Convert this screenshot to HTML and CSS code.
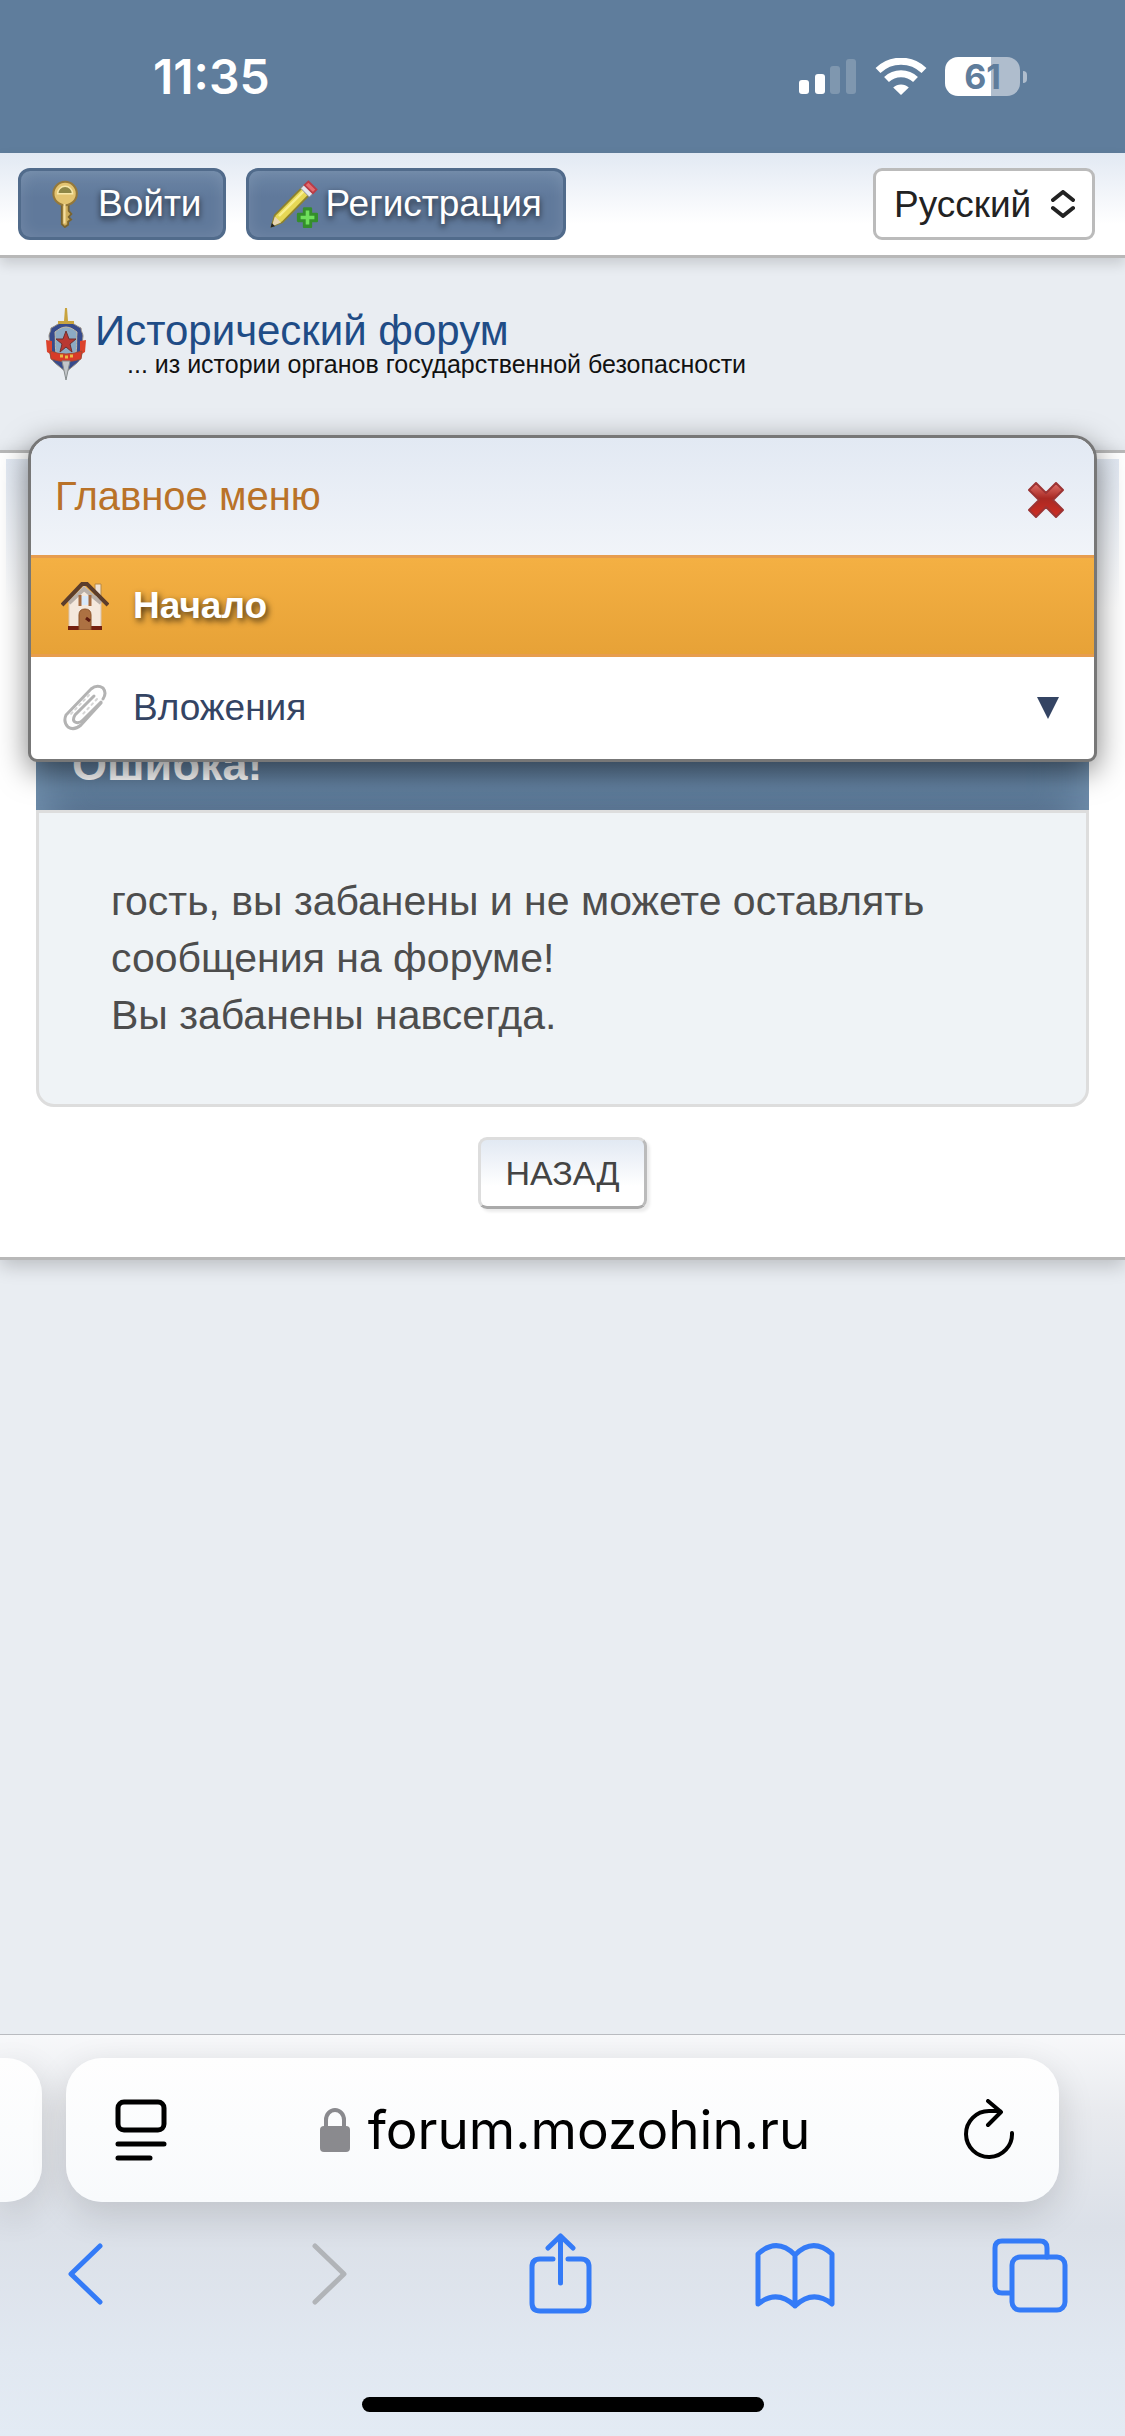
FILE: index.html
```html
<!DOCTYPE html>
<html lang="ru">
<head>
  <meta charset="UTF-8" />
  <meta name="viewport" content="width=device-width, initial-scale=1" />
  <title>Исторический форум</title>
  <link rel="stylesheet" href="styles.css">
</head>
<body>

  <!-- Status bar -->
  <div class="status-bar">
    <span class="clock">11:35</span>
    <div class="status-icons">
      <svg width="58" height="36" viewBox="0 0 58 36" fill="#fff">
        <rect x="0" y="21" width="10" height="14" rx="3"/>
        <rect x="16" y="15" width="10" height="20" rx="3"/>
        <rect x="31" y="7" width="10" height="28" rx="3" opacity=".2"/>
        <rect x="47" y="0" width="10" height="35" rx="3" opacity=".2"/>
      </svg>
      <svg width="52" height="38" viewBox="0 0 52 38" fill="none" stroke="#fff" stroke-width="7">
        <path d="M3 12.500a33 33 0 0 1 46 0"/>
        <path d="M11.500 21.500a21 21 0 0 1 29 0"/>
        <path d="M26 37l-7.800-7.500a11.300 11.300 0 0 1 15.600 0z" fill="#fff" stroke="none"/>
      </svg>
      <div class="battery"><span class="battery-level">61</span></div>
    </div>
  </div>

  <!-- Login / register / language -->
  <div class="top-section">
    <a class="button login" href="#">
      <svg width="48" height="48" viewBox="0 0 16 16">
        <path d="M6.600 7.500v7.200l1 1 1.100-.8v-1l1-.7-.8-.9.9-1-.9-1V7.500z" fill="#cfae5c" stroke="#7a642f" stroke-width=".6"/>
        <circle cx="7.700" cy="4.500" r="3.900" fill="#e3c471" stroke="#94783a" stroke-width=".7"/>
        <path d="M5.200 4.600a2.500 2.500 0 0 1 5 0z" fill="#8e8746" stroke="#f7e7a8" stroke-width=".5"/>
        <path d="M7.500 8v6.500" stroke="#f5dea0" stroke-width=".7"/>
      </svg>
      <span>Войти</span>
    </a>
    <a class="button register" href="#">
      <svg width="48" height="48" viewBox="0 0 16 16">
        <path d="M.6 15.400l1-3.700L10.700 2.500l2.400 2.400-9 9.200z" fill="#e6d855" stroke="#8d822e" stroke-width=".6"/>
        <path d="M3 12L12 3" stroke="#f8ef90" stroke-width=".8"/>
        <path d="M.6 15.500l1-3.300 2.100 2z" fill="#e8d5b0"/>
        <path d="M.2 15.800l.4-1.500 1.100 1.100z" fill="#222"/>
        <path d="M10.300 2.800l1.100-1.200 2.900 2.900-1.200 1.200z" fill="#e3e6ee" stroke="#8a8d96" stroke-width=".3"/>
        <path d="M11.500 1.700L12.800.5l2.700 2.700-1.200 1.200z" fill="#e46b70" stroke="#b93c46" stroke-width=".6"/>
        <path d="M11.400 9.500h2.200v1.900h2v2.200h-2v2h-2.200v-2h-2v-2.200h2z" fill="#348e2c" stroke="#348e2c" stroke-width=".9" stroke-linejoin="round"/>
        <path d="M12.500 10.200v4.600M10.200 12.500h4.600" stroke="#6fdf5c" stroke-width="1.200"/>
      </svg>
      <span>Регистрация</span>
    </a>
    <div class="lang-select">
      <select aria-label="Язык">
        <option>Русский</option>
      </select>
      <svg width="24" height="28" viewBox="0 0 24 28" fill="none" stroke="#222" stroke-width="4" stroke-linecap="round" stroke-linejoin="round">
        <path d="M2 10L12 2l10 8M2 18l10 8 10-8"/>
      </svg>
    </div>
  </div>

  <!-- Logo -->
  <header class="header">
    <svg class="emblem" width="42" height="72" viewBox="0 0 42 72">
      <path d="M21 14C14 14 11 18 6 20c0 4-2 5-2 8 2 12-2 20 6 27l11 9 11-9c8-7 4-15 6-27 0-3-2-4-2-8-5-2-8-6-15-6z" fill="#374b8c" stroke="#958e83"/>
      <path d="M1 32l6 1v14l-5-3z M41 32l-6 1v14l5-3z" fill="#dc432d"/>
      <path d="M21 19c-5 0-8 3-11 5 1 12-1 19 3 25h16c4-6 2-13 3-25-3-2-6-5-11-5z" fill="#8caac4" stroke="#c6bca5"/>
      <path d="M19 13l1-13h2l1 13h6v3H13v-3z" fill="#c8a33e"/>
      <path d="M21 23l3 8h7l-6 5 2 8-6-5-6 5 2-8-6-5h7z" fill="#b93932" stroke="#6e302e"/>
      <path d="M5 43q16 6 32 0l-1 8q-15 5-30 0z" fill="#d83b29" stroke="#a34a35"/>
      <path d="M15 48h3m2 1h3m2-1h3" stroke="#e9ba45" stroke-width="3"/>
      <path d="M17 53h8l-4 19z" fill="#c3c6c9" stroke="#858b8c"/>
    </svg>
    <div class="logo-text">
      <h1>Исторический форум</h1>
      <p>... из истории органов государственной безопасности</p>
    </div>
  </header>

  <!-- Page content -->
  <div class="wrapper">
    <!-- Popup menu -->
    <nav class="popup-menu">
      <div class="popup-heading">
        <span>Главное меню</span>
        <button class="close-btn" aria-label="Закрыть">
          <svg width="36" height="36" viewBox="0 0 36 36">
            <defs>
              <linearGradient id="cross" x1="0" y1="0" x2="0" y2="1">
                <stop offset="0" stop-color="#e0716b"/>
                <stop offset=".45" stop-color="#a92923"/>
                <stop offset="1" stop-color="#cf2d23"/>
              </linearGradient>
            </defs>
            <path d="M8 1l10 10L28 1l7 7-10 10 10 10-7 7-10-10L8 35l-7-7 10-10L1 8z" fill="url(#cross)" stroke="#9c3434" stroke-width="2" stroke-linejoin="round"/>
          </svg>
        </button>
      </div>
      <a class="menu-item active" href="#">
        <svg width="48" height="48" viewBox="0 0 48 48">
          <path d="M34 2h6v16h-6z" fill="#eee1d5" stroke="#b88944"/>
          <path d="M8 20L23 4l17 16v26H8z" fill="#f4e8dd" stroke="#d9c3ae"/>
          <path d="M8 21L23 7l17 14" fill="none" stroke="#b9afa8" stroke-width="4"/>
          <path d="M1 23L21 2h5l21 21" fill="none" stroke="#5c3d2b" stroke-width="4"/>
          <path d="M7 46h34" stroke="#74200f" stroke-width="4"/>
          <path d="M20 14h9v9h-9z" fill="#d8e8fa"/>
          <path d="M19 13v11M29 13v11" stroke="#a56b40" stroke-width="3"/>
          <path d="M18 48V33q0-6 6-6t6 6v15z" fill="#ad7142" stroke="#8b5229"/>
          <path d="M25 36l4 3" stroke="#5e1b10" stroke-width="3"/>
        </svg>
        <span>Начало</span>
      </a>
      <a class="menu-item" href="#">
        <svg width="48" height="48" viewBox="0 0 48 48" fill="none" stroke="#b3b3b3" stroke-width="3" stroke-linecap="round">
          <path d="M40 19L20 41q-7 6-13 2-5-5-2-12L30 5q6-5 12-1 4 5 0 11"/>
          <path d="M33 12L14 31q-3 5 0 7 4 2 8-2l18-18"/>
          <path d="M28 11L9 31M36 15L20 32" stroke="#d6d6d6" stroke-width="2" stroke-dasharray="2 4"/>
        </svg>
        <span>Вложения</span>
        <svg class="arrow" width="22" height="22" viewBox="0 0 22 22"><path d="M0 0h22L11 22z" fill="#344463"/></svg>
      </a>
    </nav>

    <main class="main-content">
      <h2 class="cat-bar">Ошибка!</h2>
      <div class="error-box">
        <p>гость, вы забанены и не можете оставлять сообщения на форуме!<br>Вы забанены навсегда.</p>
      </div>
      <button class="back-btn">НАЗАД</button>
    </main>
  </div>

  <!-- Browser bar -->
  <footer class="browser-bar">
    <div class="address-row">
      <div class="prev-tab"></div>
      <div class="address">
        <button aria-label="Меню страницы">
          <svg width="52" height="62" viewBox="0 0 52 62" fill="none" stroke="#000" stroke-width="5" stroke-linecap="round">
            <rect x="3" y="3" width="46" height="28" rx="6"/>
            <path d="M3 45h46M3 59h32"/>
          </svg>
        </button>
        <div class="domain">
          <svg width="30" height="44" viewBox="0 0 30 44">
            <path d="M6 20v-8a9 10 0 0 1 18 0v8" fill="none" stroke="#8a8a8e" stroke-width="4"/>
            <rect y="18" width="30" height="26" rx="4" fill="#8a8a8e"/>
          </svg>
          <span>forum.mozohin.ru</span>
        </div>
        <button aria-label="Обновить">
          <svg width="52" height="62" viewBox="0 0 52 62" fill="none" stroke="#000" stroke-width="4" stroke-linecap="round" stroke-linejoin="round">
            <path d="M49 34a23 23 0 1 1-23-22h11M25 2l13 11-13 13"/>
          </svg>
        </button>
      </div>
    </div>
    <div class="toolbar">
      <button aria-label="Назад">
        <svg width="80" height="84" viewBox="0 0 80 84"><path d="M52 14L23 42l29 28"/></svg>
      </button>
      <button aria-label="Вперёд" disabled>
        <svg width="80" height="84" viewBox="0 0 80 84"><path d="M31 14l29 28-29 28"/></svg>
      </button>
      <button aria-label="Поделиться">
        <svg width="80" height="84" viewBox="0 0 80 84">
          <path d="M33 27H20q-8 0-8 8v36q0 8 8 8h41q8 0 8-8V35q0-8-8-8H48M40.500 51V4M28 16L40.500 4 53 16"/>
        </svg>
      </button>
      <button aria-label="Закладки">
        <svg width="80" height="84" viewBox="0 0 80 84">
          <path d="M40 23Q22 5 3 22v50q19-15 37 2 18-17 37-2V22Q58 5 40 23v51"/>
        </svg>
      </button>
      <button aria-label="Вкладки">
        <svg width="80" height="84" viewBox="0 0 80 84">
          <path d="M20 61h-9q-7 0-7-7V16q0-7 7-7h38q7 0 7 7v9"/>
          <rect x="21" y="25" width="53" height="53" rx="8"/>
        </svg>
      </button>
    </div>
    <div class="home-indicator"></div>
  </footer>

</body>
</html>
```
FILE: styles.css
```css
* {
  margin: 0;
  padding: 0;
  box-sizing: border-box;
}

body {
  font-family: "Liberation Sans", Arial, sans-serif;
  font-size: 37px;
  background-color: #e9edf2;
  color: #4d4d4d;
  display: flex;
  flex-direction: column;
  min-height: 100vh;
}

a {
  text-decoration: none;
}

button {
  font-family: inherit;
  cursor: pointer;
}

svg {
  display: block;
  flex-shrink: 0;
}

/* Status bar */
.status-bar {
  background-color: #5f7d9c;
  color: white;
  height: 153px;
  padding: 0 98px 0 153px;
  display: flex;
  align-items: center;
  justify-content: space-between;
  font-family: Inter, sans-serif;
}

.clock {
  font-size: 48px;
  font-weight: 600;
}

.status-icons {
  display: flex;
  align-items: center;
  gap: 18px;
}

.battery {
  display: flex;
  align-items: center;
  gap: 3px;
}

.battery-level {
  width: 75px;
  height: 39px;
  border-radius: 13px;
  background: linear-gradient(to right, white 61%, #afbdcd 61%);
  color: #5f7d9c;
  font-size: 34px;
  line-height: 39px;
  font-weight: 700;
  text-align: center;
}

.battery::after {
  content: "";
  width: 4px;
  height: 12px;
  border-radius: 0 4px 4px 0;
  background-color: #afbdcd;
}

/* Top section */
.top-section {
  display: flex;
  align-items: center;
  gap: 20px;
  padding: 15px 30px 15px 18px;
  background: linear-gradient(#e2e9f3, white 70%);
  border-bottom: 3px solid #b8b8b8;
  box-shadow: 0 6px 12px rgba(0, 0, 0, 0.14);
}

.button {
  display: flex;
  align-items: center;
  gap: 8px;
  height: 72px;
  padding: 0 21px;
  border: 3px solid #516b8b;
  border-radius: 12px;
  background: linear-gradient(#6b85a5, #60799b 40%, #60799b);
  box-shadow: inset 0 0 16px rgba(255, 255, 255, 0.12);
  color: white;
  text-shadow: 0 3px 6px rgba(0, 0, 0, 0.7);
}

.lang-select {
  position: relative;
  margin-left: auto;
}

.lang-select select {
  appearance: none;
  width: 222px;
  height: 72px;
  padding: 0 18px;
  border: 3px solid #bbb;
  border-radius: 9px;
  background-color: white;
  color: #222;
  font-family: inherit;
  font-size: 37px;
}

.lang-select svg {
  position: absolute;
  right: 20px;
  top: 22px;
  pointer-events: none;
}

/* Header */
.header {
  display: flex;
  align-items: flex-start;
  gap: 8px;
  height: 192px;
  padding: 50px 45px;
}

.logo-text {
  padding-top: 2px;
}

.logo-text h1 {
  font-size: 42px;
  line-height: 42px;
  font-weight: 400;
  color: #1f4c86;
}

.logo-text p {
  font-size: 25px;
  line-height: 25px;
  color: #111;
  padding-left: 32px;
}

/* Wrapper */
.wrapper {
  position: relative;
  padding: 6px;
  background-color: white;
  border-top: 3px solid #b8b8b8;
  border-bottom: 3px solid #b8b8b8;
  box-shadow: 0 6px 18px rgba(0, 0, 0, 0.2);
}

.main-content {
  display: flex;
  flex-direction: column;
  padding: 261px 30px 42px;
  background: linear-gradient(#e2e9f3, white 150px);
}

/* Popup menu */
.popup-menu {
  position: absolute;
  left: 28px;
  right: 28px;
  top: -18px;
  border: 3px solid #777;
  border-radius: 24px 24px 9px 9px;
  background-color: white;
  box-shadow: 0 9px 30px rgba(0, 0, 0, 0.5);
  overflow: hidden;
}

.popup-heading {
  display: flex;
  align-items: center;
  justify-content: space-between;
  height: 117px;
  padding: 0 30px 0 24px;
  background: linear-gradient(#e2e9f3, #f1f4f9);
  color: #b97228;
  font-size: 40px;
}

.close-btn {
  border: none;
  background: none;
  padding-top: 6px;
}

.menu-item {
  display: flex;
  align-items: center;
  gap: 24px;
  height: 102px;
  padding: 0 35px 0 30px;
  color: #344463;
}

.menu-item.active {
  background: linear-gradient(#f4b043, #e7a237);
  border-top: 3px solid #e79d4e;
  border-bottom: 3px solid #e79d4e;
  color: white;
  font-weight: bold;
  text-shadow: 2px 3px 6px rgba(0, 0, 0, 0.7);
}

.menu-item .arrow {
  margin-left: auto;
}

/* Error message */
.cat-bar {
  height: 90px;
  padding: 0 36px;
  background: linear-gradient(#5f7d9c, #617f9e 75%, #58728f);
  box-shadow: inset 45px 0 45px -36px #7493b0, inset -45px 0 45px -36px #7493b0;
  color: white;
  font-size: 45px;
  line-height: 90px;
}

.error-box {
  padding: 60px 72px;
  border: 3px solid #ddd;
  border-radius: 0 0 18px 18px;
  background-color: #eff3f6;
  font-size: 41px;
  line-height: 57px;
}

.back-btn {
  align-self: center;
  height: 72px;
  margin-top: 30px;
  padding: 0 24px;
  border: 3px solid;
  border-color: #ddd #bbb #aaa #ddd;
  border-radius: 9px;
  background: linear-gradient(#e2e9f3, white 70%);
  box-shadow: 3px 3px 3px rgba(0, 0, 0, 0.08);
  color: #444;
  font-size: 34px;
}

/* Browser bar */
.browser-bar {
  margin-top: auto;
  padding: 23px 0 24px;
  border-top: 1px solid #b9bbc0;
  background: linear-gradient(#f7f8fa, #e8eaee 20%, #dbe0e8 48%, #e1e8f1 80%, #e3ebf4);
  overflow: hidden;
}

.address-row {
  display: flex;
  gap: 24px;
  padding-right: 66px;
}

.prev-tab,
.address {
  height: 144px;
  background: linear-gradient(#fefefe, #f8fafc);
  box-shadow: 0 12px 36px rgba(0, 0, 0, 0.14);
}

.prev-tab {
  width: 42px;
  border-radius: 0 36px 36px 0;
}

.address {
  flex: 1;
  display: flex;
  align-items: center;
  justify-content: space-between;
  padding: 0 44px 0 49px;
  border-radius: 36px;
  color: black;
}

.address button,
.toolbar button {
  border: none;
  background: none;
}

.domain {
  display: flex;
  align-items: center;
  gap: 18px;
  font-family: Inter, sans-serif;
  font-size: 53px;
}

.toolbar {
  display: flex;
  justify-content: space-between;
  padding: 30px 54px 0 48px;
}

.toolbar svg {
  fill: none;
  stroke: #347bf7;
  stroke-width: 5;
  stroke-linecap: round;
  stroke-linejoin: round;
}

.toolbar button:disabled svg {
  stroke: #b1b4b8;
}

.home-indicator {
  width: 402px;
  height: 15px;
  margin: 81px auto 0;
  border-radius: 8px;
  background-color: black;
}
```
